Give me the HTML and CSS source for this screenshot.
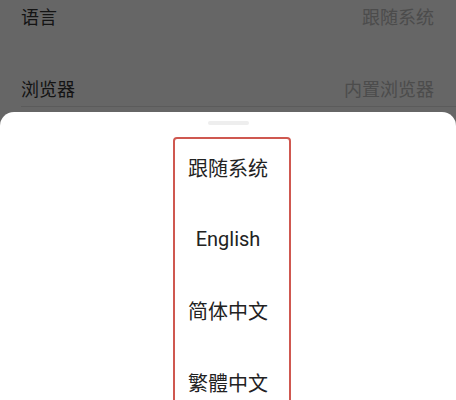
FILE: index.html
```html
<!DOCTYPE html>
<html lang="zh-CN">
<head>
<meta charset="utf-8">
<link rel="stylesheet" href="styles.css">
</head>
<body>
<div class="screen">
  <div class="settings">
    <div class="row">
      <span class="label">语言</span>
      <span class="value">跟随系统</span>
    </div>
    <div class="row row-divided">
      <span class="label">浏览器</span>
      <span class="value">内置浏览器</span>
    </div>
  </div>
  <div class="overlay"></div>
  <div class="sheet">
    <div class="handle"></div>
    <ul class="options">
      <li class="option">跟随系统</li>
      <li class="option">English</li>
      <li class="option">简体中文</li>
      <li class="option">繁體中文</li>
    </ul>
  </div>
  <div class="annotation"></div>
</div>
</body>
</html>
```
FILE: styles.css
```css
html, body {
  margin: 0;
  padding: 0;
}
body {
  width: 456px;
  height: 400px;
  overflow: hidden;
  background: #ffffff;
  font-family: Roboto, "Noto Sans CJK SC", sans-serif;
}
.screen {
  position: relative;
  width: 456px;
  height: 400px;
  overflow: hidden;
}
.settings {
  padding: 6px 0 0 21px;
}
.row {
  display: flex;
  justify-content: space-between;
  align-items: center;
  height: 24px;
  padding-right: 22px;
  font-size: 18px;
  line-height: 24px;
}
.row + .row {
  margin-top: 48px;
}
.row-divided {
  padding-bottom: 4px;
  border-bottom: 1px solid #e4e4e4;
}
.label {
  color: #333333;
}
.value {
  color: #bdbdbd;
}
.overlay {
  position: absolute;
  inset: 0;
  background: rgba(0, 0, 0, 0.6);
}
.sheet {
  position: absolute;
  left: 0;
  right: 0;
  top: 112px;
  height: 400px;
  background: #ffffff;
  border-radius: 14px 14px 0 0;
  padding-top: 9px;
}
.handle {
  width: 41px;
  height: 4px;
  margin: 0 auto;
  border-radius: 2px;
  background: #eeeeee;
}
.options {
  list-style: none;
  margin: 6.75px 0 0;
  padding: 0;
}
.option {
  height: 71.5px;
  display: flex;
  align-items: center;
  justify-content: center;
  font-size: 20px;
  color: #222222;
}
.annotation {
  position: absolute;
  left: 173px;
  top: 137px;
  width: 114px;
  height: 300px;
  border: 2px solid #cf5850;
  border-radius: 4px;
}
```
